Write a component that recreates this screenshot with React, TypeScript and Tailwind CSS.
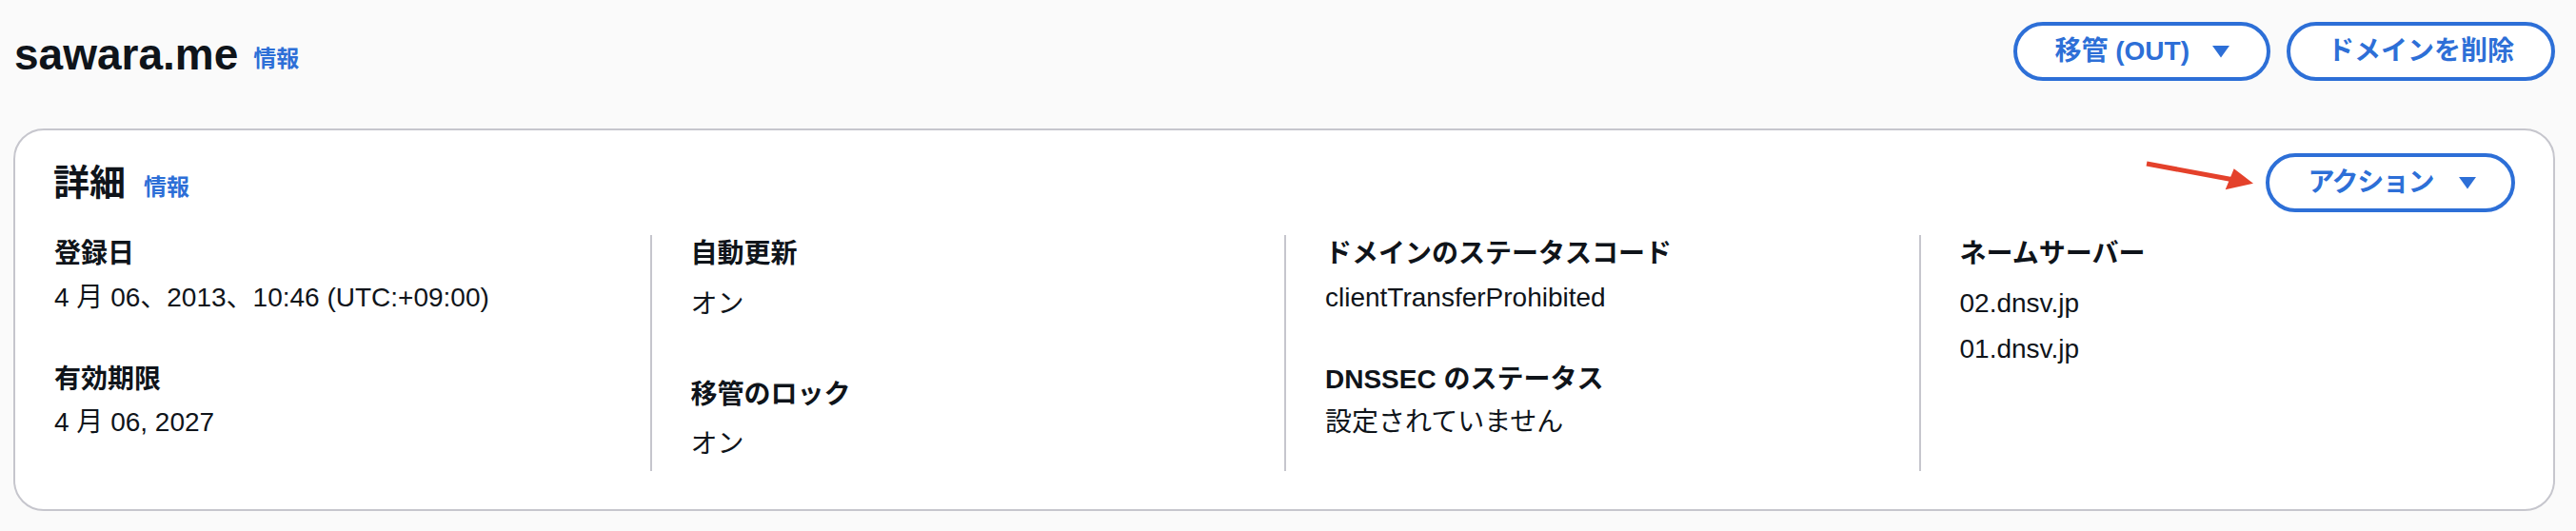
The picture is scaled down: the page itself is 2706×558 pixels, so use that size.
import React from "react";

const FONT = { fontFamily: '"Liberation Sans", "Noto Sans CJK JP", sans-serif' };

function Caret() {
  return (
    <svg width="20" height="14" viewBox="0 0 20 14" className="shrink-0">
      <polygon points="1,1 19,1 10,13.5" fill="#2d6fd7" />
    </svg>
  );
}

function Label({ children, className = "" }: { children: React.ReactNode; className?: string }) {
  return <div className={"text-[28px] leading-[40px] font-bold text-[#0f141a] whitespace-nowrap " + className}>{children}</div>;
}

function Value({ children, className = "" }: { children: React.ReactNode; className?: string }) {
  return <div className={"text-[28px] leading-[40px] text-[#0f141a] whitespace-nowrap " + className}>{children}</div>;
}

export default function App() {
  return (
    <div style={FONT} className="w-[2706px] h-[558px] bg-[#fafafa] pl-[14px] pr-[22px] pt-[23px] overflow-hidden">
      {/* Page header */}
      <div className="flex items-center justify-between h-[62px]">
        <div className="flex items-baseline pl-[1px] mt-[6px]">
          <h1 className="text-[46px] leading-[56px] font-bold text-[#0f141a]">sawara.me</h1>
          <span className="relative -top-[3px] ml-[16px] text-[24px] font-bold text-[#2d6fd7]">情報</span>
        </div>
        <div className="flex items-center gap-[17px]">
          <button className="h-[62px] flex items-center gap-[23px] pl-[39px] pr-[38px] rounded-full border-4 border-[#2d6fd7] bg-white text-[28px] font-bold text-[#2d6fd7]">
            <span>移管 (OUT)</span>
            <Caret />
          </button>
          <button className="h-[62px] flex items-center px-[39px] rounded-full border-4 border-[#2d6fd7] bg-white text-[28px] font-bold text-[#2d6fd7]">
            ドメインを削除
          </button>
        </div>
      </div>

      {/* Details container */}
      <div className="relative mt-[50px] rounded-[32px] border-2 border-[#c6c6cd] bg-white">
        <div className="flex items-center justify-between h-[62px] mt-[24px] px-[40px]">
          <div className="flex items-baseline">
            <h2 className="text-[38px] leading-[46px] font-bold text-[#0f141a]">詳細</h2>
            <span className="ml-[19px] text-[24px] font-bold text-[#2d6fd7]">情報</span>
          </div>
          <button className="h-[62px] flex items-center gap-[26px] pl-[40px] pr-[36px] rounded-full border-4 border-[#2d6fd7] bg-white text-[28px] font-bold text-[#2d6fd7]">
            <span className="tracking-[-1.4px]">アクション</span>
            <Caret />
          </button>
        </div>

        <div className="grid grid-cols-4 h-[248px] mt-[24px] mb-[40px]">
          <div className="pl-[41px]">
            <Label>登録日</Label>
            <Value className="mt-[6px]">4 月 06、2013、10:46 (UTC:+09:00)</Value>
            <Label className="mt-[46px]">有効期限</Label>
            <Value className="mt-[5px]">4 月 06, 2027</Value>
          </div>
          <div className="pl-[41px] border-l-2 border-[#c6c6cd]">
            <Label>自動更新</Label>
            <Value className="mt-[13px]">オン</Value>
            <Label className="mt-[55px]">移管のロック</Label>
            <Value className="mt-[12px]">オン</Value>
          </div>
          <div className="pl-[41px] border-l-2 border-[#c6c6cd]">
            <Label>ドメインのステータスコード</Label>
            <Value className="mt-[6px]">clientTransferProhibited</Value>
            <Label className="mt-[46px]">DNSSEC のステータス</Label>
            <Value className="mt-[5px]">設定されていません</Value>
          </div>
          <div className="pl-[41px] border-l-2 border-[#c6c6cd]">
            <Label>ネームサーバー</Label>
            <Value className="mt-[12px]">02.dnsv.jp</Value>
            <Value className="mt-[8px]">01.dnsv.jp</Value>
          </div>
        </div>

        {/* annotation arrow */}
        <svg
          className="absolute left-[2230px] top-[20px]"
          width="130"
          height="50"
          viewBox="0 0 130 50"
        >
          <line x1="9" y1="15" x2="98" y2="31.5" stroke="#e4412b" strokeWidth="5" />
          <polygon points="100.7,20.3 91.7,42.3 121,35.7" fill="#e4412b" />
        </svg>
      </div>
    </div>
  );
}
